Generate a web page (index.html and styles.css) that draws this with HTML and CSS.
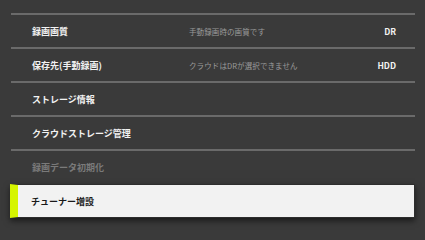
FILE: index.html
```html
<!DOCTYPE html>
<html lang="ja">
<head>
<meta charset="utf-8">
<link rel="stylesheet" href="styles.css">
</head>
<body>
<div class="list">
  <div class="row">
    <span class="label">録画画質</span>
    <span class="desc">手動録画時の画質です</span>
    <span class="value">DR</span>
  </div>
  <div class="row">
    <span class="label">保存先(手動録画)</span>
    <span class="desc">クラウドはDRが選択できません</span>
    <span class="value">HDD</span>
  </div>
  <div class="row">
    <span class="label">ストレージ情報</span>
  </div>
  <div class="row">
    <span class="label">クラウドストレージ管理</span>
  </div>
  <div class="row disabled">
    <span class="label">録画データ初期化</span>
  </div>
  <div class="row selected">
    <span class="label">チューナー増設</span>
  </div>
</div>
</body>
</html>
```
FILE: styles.css
```css
html, body {
  margin: 0;
  padding: 0;
  background: #3a3a3a;
  width: 425px;
  height: 239px;
  overflow: hidden;
  font-family: "Noto Sans CJK JP", "Noto Sans", sans-serif;
}
.list {
  padding: 13px 10px 0 11px;
  display: flex;
  flex-direction: column;
}
.row {
  height: 32px;
  border-top: 2px solid #6a6a6a;
  display: flex;
  align-items: center;
  padding: 0 19px 0 21px;
  color: #f2f2f2;
}
.label {
  font-size: 9px;
  font-weight: 700;
  width: 157px;
  white-space: nowrap;
}
.desc {
  font-size: 7.5px;
  letter-spacing: 0.1px;
  color: #9a9a9a;
  flex: 1;
  white-space: nowrap;
}
.value {
  font-size: 8.5px;
  font-weight: 700;
}
.disabled {
  color: #7a7a7a;
}
.selected {
  border-top: none;
  margin: 1px 0 0 -1px;
  height: 32px;
  background: #f2f2f2;
  border: 1px solid #2e2e2e;
  border-left: 8px solid #d6f500;
  color: #1a1a1a;
  padding-left: 13px;
  box-shadow: 0 3px 6px rgba(0, 0, 0, 0.55);
}
```
